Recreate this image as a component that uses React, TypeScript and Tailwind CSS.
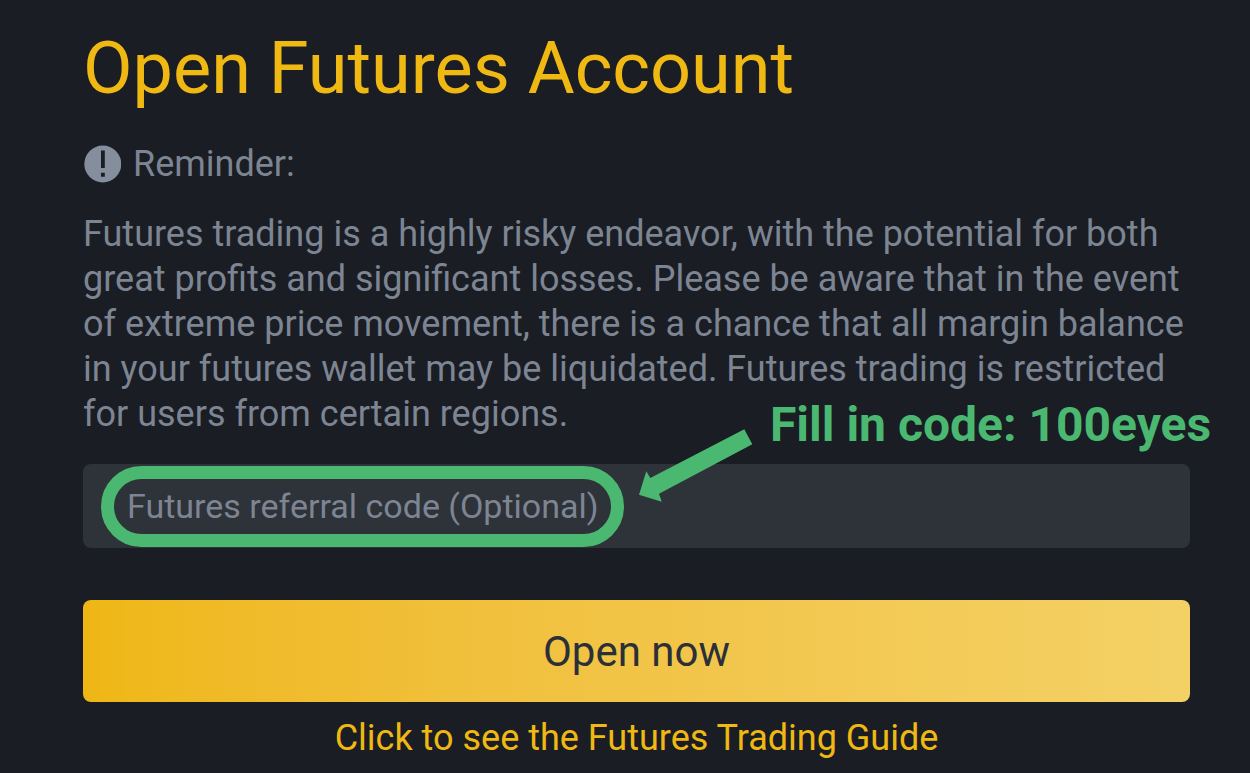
import { useState } from 'react';

const Callout = () => (
  <div className="pointer-events-none absolute inset-0 text-[#4bb871]">
    <div className="absolute top-[2px] left-[18px] h-[81px] w-[523px] rounded-full border-[13px] border-current" />
    <svg viewBox="0 0 114 74" className="absolute -top-9 left-[556px] h-[74px] w-[114px]" fill="currentColor" aria-hidden="true">
      <path d="M105.3 1.3l8 15L20 65.7l2.7 8L0 66.7l7.3-23.4 4 6.7z" />
    </svg>
    <div className="absolute -top-[67px] left-[687px] whitespace-nowrap text-[48px] leading-14 font-bold">
      Fill in code: 100eyes
    </div>
  </div>
);

const App = () => {
  const [code, setCode] = useState('');

  return (
    <main className="min-h-screen bg-[#1a1d24] pl-[83px] pr-[60px] pt-8 font-['Roboto',sans-serif]">
      <h1 className="text-[72px] leading-[74px] text-[#efb812]">Open Futures Account</h1>

      <div className="mt-[34px] flex items-center gap-3 text-[#7d8593]">
        <svg viewBox="0 0 38 38" className="size-[38px]" aria-hidden="true">
          <circle cx="19.8" cy="19" r="18.5" fill="#848e9c" />
          <path d="M18 5.5h3.8V23H18zM18 27.7h3.8v4H18z" fill="#1a1d24" />
        </svg>
        <span className="text-[36px] leading-12">Reminder:</span>
      </div>

      <p className="mt-6 text-[36px] leading-[45px] text-[#7d8593]">
        Futures trading is a highly risky endeavor, with the potential for both<br />
        great profits and significant losses. Please be aware that in the event<br />
        of extreme price movement, there is a chance that all margin balance<br />
        in your futures wallet may be liquidated. Futures trading is restricted<br />
        for users from certain regions.
      </p>

      <form className="mt-[27px]" onSubmit={(e) => e.preventDefault()}>
        <div className="relative">
          <input
            type="text"
            value={code}
            onChange={(e) => setCode(e.target.value)}
            aria-label="Futures referral code"
            placeholder="Futures referral code (Optional)"
            className="block h-[84px] w-full rounded-lg bg-[#2e3239] px-11 text-[34px] text-[#eaecef] placeholder:text-[#7d8593]"
          />
          <Callout />
        </div>
        <button
          type="submit"
          className="mt-13 block h-[102px] w-full rounded-lg bg-linear-to-r from-[#efb714] to-[#f4d165] text-[42px] text-[#2a2f38]"
        >
          Open now
        </button>
      </form>
      <a href="#guide" className="mt-3 block text-center text-[36px] leading-12 text-[#efb812]">
        Click to see the Futures Trading Guide
      </a>
    </main>
  );
};

export default App;
